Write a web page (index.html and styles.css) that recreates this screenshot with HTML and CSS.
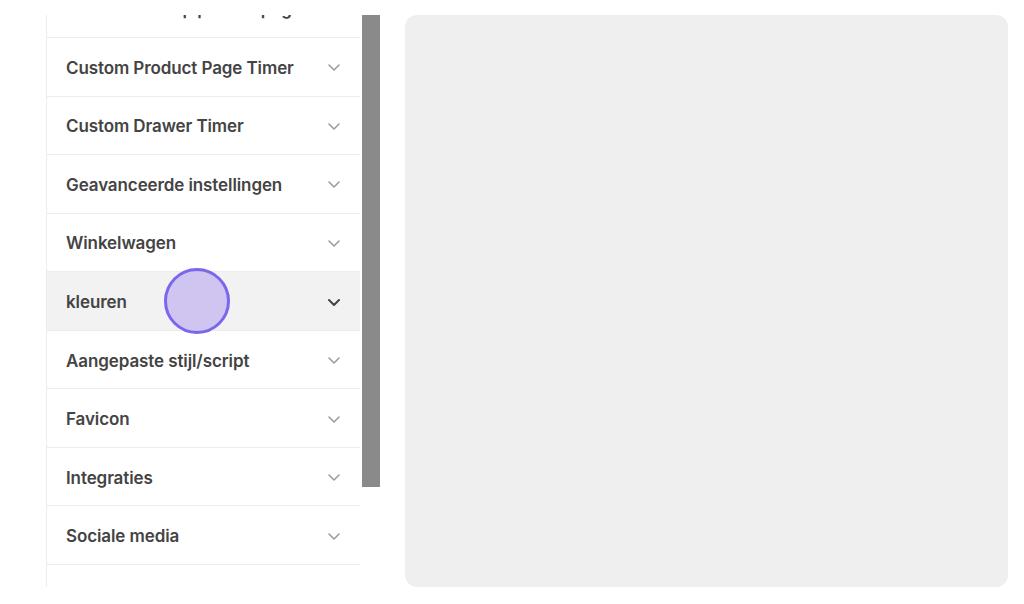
FILE: index.html
```html
<!DOCTYPE html>
<html lang="en">
<head>
    <meta charset="UTF-8">
    <meta name="viewport" content="width=device-width, initial-scale=1.0">
    <title>Instellingen</title>
    <link rel="stylesheet" href="styles.css">
</head>
<body>
    <div class="layout">
        <div class="sidebar">
            <div class="menu">
                <div class="menu-list">
                    <div class="menu-item"><span>Verzendbalk op productpagina</span><svg class="chevron" viewBox="0 0 12 7"><path d="M1 1l5 5 5-5"/></svg></div>
                    <div class="menu-item"><span>Custom Product Page Timer</span><svg class="chevron" viewBox="0 0 12 7"><path d="M1 1l5 5 5-5"/></svg></div>
                    <div class="menu-item"><span>Custom Drawer Timer</span><svg class="chevron" viewBox="0 0 12 7"><path d="M1 1l5 5 5-5"/></svg></div>
                    <div class="menu-item"><span>Geavanceerde instellingen</span><svg class="chevron" viewBox="0 0 12 7"><path d="M1 1l5 5 5-5"/></svg></div>
                    <div class="menu-item"><span>Winkelwagen</span><svg class="chevron" viewBox="0 0 12 7"><path d="M1 1l5 5 5-5"/></svg></div>
                    <div class="menu-item active">
                        <span>kleuren</span>
                        <svg class="chevron" viewBox="0 0 12 7"><path d="M1 1l5 5 5-5"/></svg>
                        <div class="click-dot"></div>
                    </div>
                    <div class="menu-item"><span>Aangepaste stijl/script</span><svg class="chevron" viewBox="0 0 12 7"><path d="M1 1l5 5 5-5"/></svg></div>
                    <div class="menu-item"><span>Favicon</span><svg class="chevron" viewBox="0 0 12 7"><path d="M1 1l5 5 5-5"/></svg></div>
                    <div class="menu-item"><span>Integraties</span><svg class="chevron" viewBox="0 0 12 7"><path d="M1 1l5 5 5-5"/></svg></div>
                    <div class="menu-item"><span>Sociale media</span><svg class="chevron" viewBox="0 0 12 7"><path d="M1 1l5 5 5-5"/></svg></div>
                    <div class="menu-item"><span>Taal en vertalingen</span><svg class="chevron" viewBox="0 0 12 7"><path d="M1 1l5 5 5-5"/></svg></div>
                </div>
            </div>
            <div class="scrollbar">
                <div class="scroll-thumb"></div>
            </div>
        </div>
        <div class="preview"></div>
    </div>
</body>
</html>
```

FILE: styles.css
```css
* {
    margin: 0;
    padding: 0;
    box-sizing: border-box;
}

body {
    background: #ffffff;
    font-family: 'Inter', 'Noto Sans', sans-serif;
    color: #444444;
    padding: 15px 16px 0 46px;
}

.layout {
    display: flex;
    height: 572px;
}

.sidebar {
    display: flex;
    gap: 2px;
    width: 334px;
    flex-shrink: 0;
}

.menu {
    width: 314px;
    height: 100%;
    overflow: hidden;
    border-left: 1px solid #ececec;
}

.menu-list {
    margin-top: -35.5px;
}

.menu-item {
    position: relative;
    height: 58.56px;
    display: flex;
    align-items: center;
    justify-content: space-between;
    padding: 2px 20px 0 19px;
    border-bottom: 1px solid #ececec;
    font-size: 17px;
    font-weight: 600;
    letter-spacing: -0.1px;
}

.menu-item.active {
    background: #f2f2f2;
}

.chevron {
    width: 12px;
    height: 7px;
    fill: none;
    stroke: #9a9a9a;
    stroke-width: 1.5;
    stroke-linecap: round;
    stroke-linejoin: round;
}

.menu-item.active .chevron {
    stroke: #454545;
    stroke-width: 2;
}

.click-dot {
    position: absolute;
    left: 117px;
    top: -4px;
    width: 66px;
    height: 66px;
    border-radius: 50%;
    background: rgba(180, 160, 240, 0.55);
    border: 3px solid #7b66ee;
}

.scrollbar {
    width: 18px;
}

.scroll-thumb {
    height: 472px;
    background: #8a8a8a;
}

.preview {
    margin-left: 25px;
    flex: 1;
    background: #efefef;
    border-radius: 12px;
}
```
